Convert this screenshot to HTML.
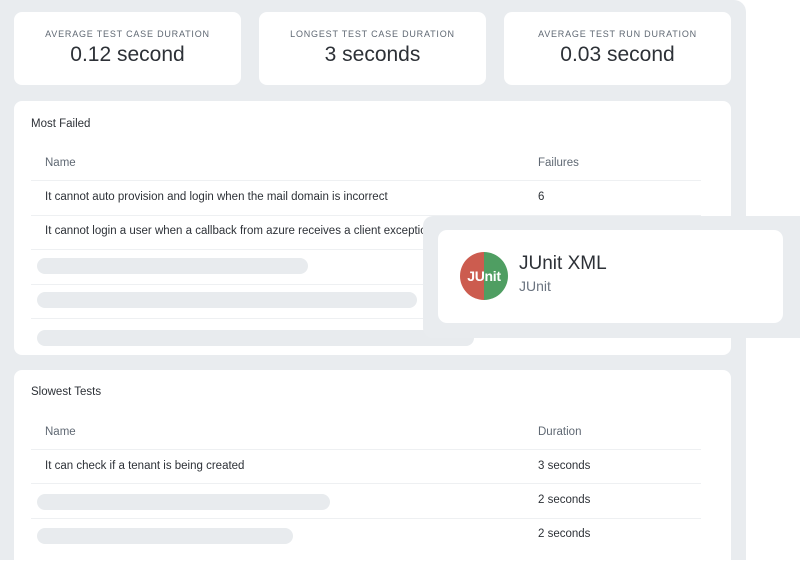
<!DOCTYPE html><html><head><style>
*{margin:0;padding:0;box-sizing:border-box}
body{width:800px;height:550px;background:#fff;font-family:"Liberation Sans",sans-serif;position:relative;overflow:hidden;color:#2d3137}
.bg{position:absolute;left:0;top:0;width:746px;height:560px;background:#e9ecef;border-radius:0 12px 0 0}
.card{position:absolute;background:#fff;border-radius:8px}
.stat{top:12px;height:73px;width:227px;text-align:center}
.stat .l{font-size:9px;letter-spacing:.8px;color:#5f6873;margin-top:17px}
.stat .v{font-size:21px;color:#2d3137;margin-top:4px}
.panel{left:14px;width:717px}
.title{position:absolute;left:17px;font-size:11.5px;color:#2d3137}
.hdr{position:absolute;font-size:11.5px;color:#5f6873}
.line{position:absolute;left:17px;width:670px;height:1px;background:#eef0f2}
.txt{position:absolute;font-size:11.5px;color:#2d3137}
.bar{position:absolute;left:23px;height:16px;background:#e8ebee;border-radius:8px}
</style></head><body>
<div class="bg"></div>
<div class="card stat" style="left:14px"><div class="l">AVERAGE TEST CASE DURATION</div><div class="v">0.12 second</div></div>
<div class="card stat" style="left:259px"><div class="l">LONGEST TEST CASE DURATION</div><div class="v">3 seconds</div></div>
<div class="card stat" style="left:504px"><div class="l">AVERAGE TEST RUN DURATION</div><div class="v">0.03 second</div></div>

<div class="card panel" style="top:101px;height:254px">
<div class="title" style="top:17px">Most Failed</div>
<div class="hdr" style="left:31px;top:56px">Name</div>
<div class="hdr" style="left:524px;top:56px">Failures</div>
<div class="line" style="top:79px"></div>
<div class="txt" style="left:31px;top:90px">It cannot auto provision and login when the mail domain is incorrect</div>
<div class="txt" style="left:524px;top:90px">6</div>
<div class="line" style="top:114px"></div>
<div class="txt" style="left:31px;top:124px">It cannot login a user when a callback from azure receives a client exception</div>
<div class="line" style="top:148px"></div>
<div class="bar" style="top:157px;width:271px"></div>
<div class="line" style="top:183px"></div>
<div class="bar" style="top:191px;width:380px"></div>
<div class="line" style="top:217px"></div>
<div class="bar" style="top:229px;width:437px"></div>
</div>

<div class="card panel" style="top:370px;height:200px">
<div class="title" style="top:16px">Slowest Tests</div>
<div class="hdr" style="left:31px;top:56px">Name</div>
<div class="hdr" style="left:524px;top:56px">Duration</div>
<div class="line" style="top:79px"></div>
<div class="txt" style="left:31px;top:90px">It can check if a tenant is being created</div>
<div class="txt" style="left:524px;top:90px">3 seconds</div>
<div class="line" style="top:113px"></div>
<div class="bar" style="top:124px;width:293px"></div>
<div class="txt" style="left:524px;top:124px">2 seconds</div>
<div class="line" style="top:148px"></div>
<div class="bar" style="top:158px;width:256px"></div>
<div class="txt" style="left:524px;top:158px">2 seconds</div>
</div>

<div style="position:absolute;left:423px;top:216px;width:390px;height:122px;background:#e9ecef;border-radius:10px"></div>
<div class="card" style="left:438px;top:230px;width:345px;height:93px;border-radius:9px">
<div style="position:absolute;left:22px;top:22px;width:48px;height:48px;border-radius:50%;overflow:hidden;background:linear-gradient(90deg,#cc5c4f 50%,#4f9e62 50%)">
<div style="position:absolute;left:0;right:0;top:16px;text-align:center;color:#fff;font-weight:bold;font-size:14px;letter-spacing:-.3px">JUnit</div></div>
<div style="position:absolute;left:81px;top:23px;font-size:19px;color:#2d3137">JUnit XML</div>
<div style="position:absolute;left:81px;top:48px;font-size:14px;color:#6b7480">JUnit</div>
</div>
</body></html>
